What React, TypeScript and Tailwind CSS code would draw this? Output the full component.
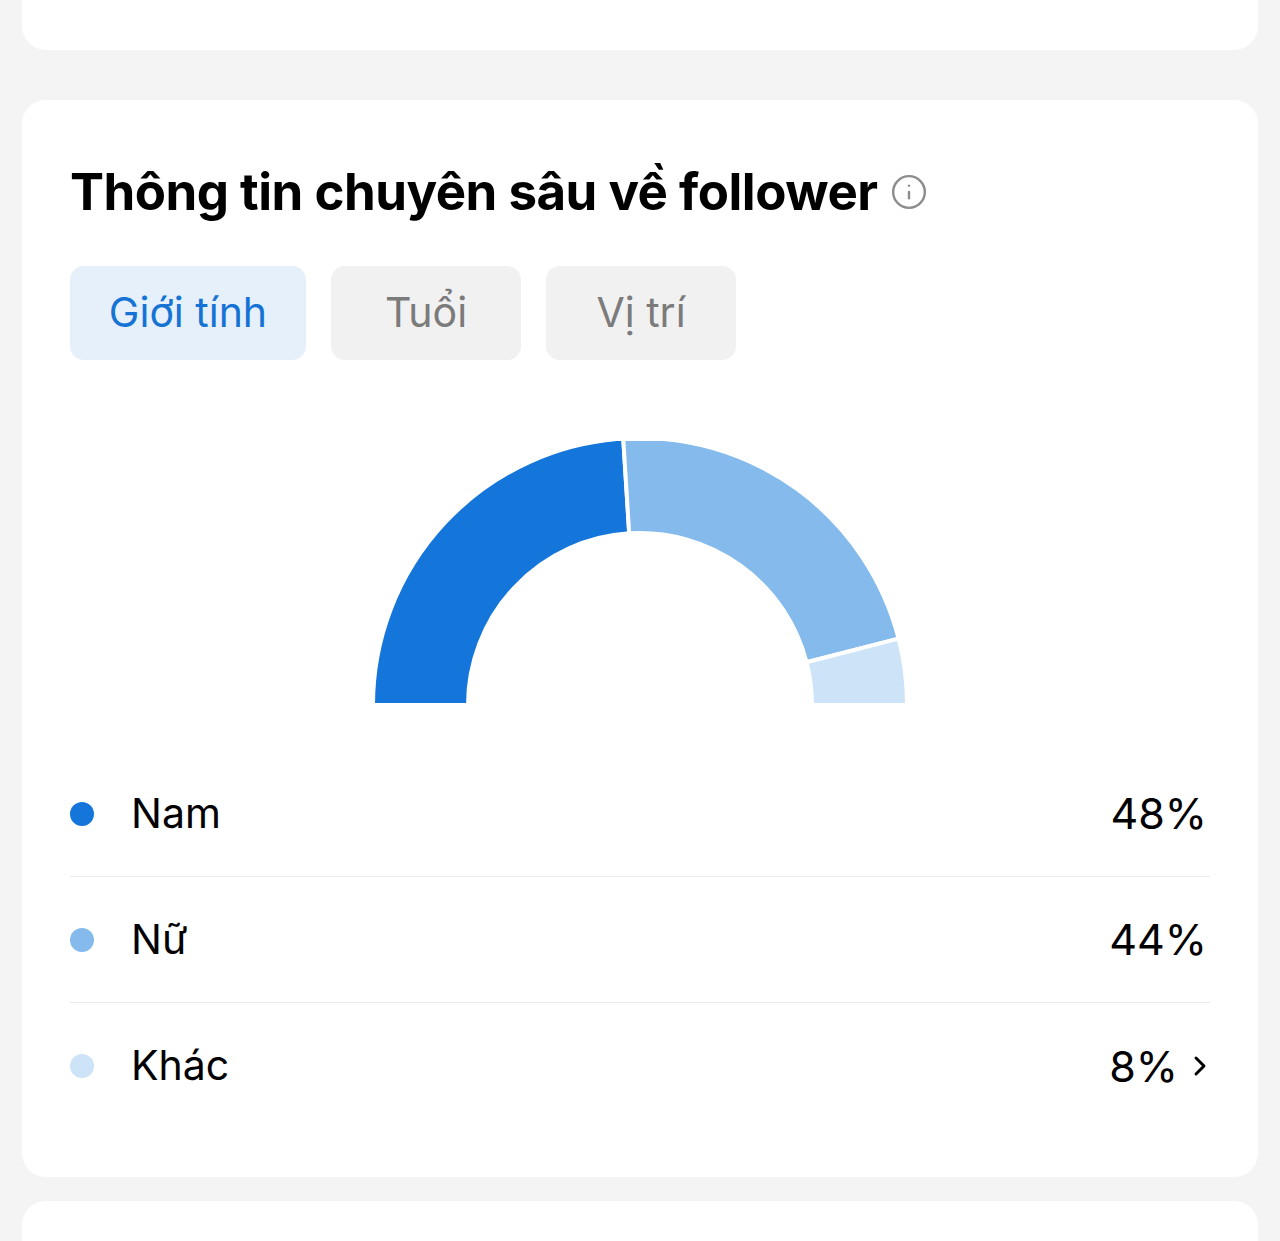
import { Info, ChevronRight } from "lucide-react";

type Slice = {
  label: string;
  value: number;
  color: string;
};

const slices: Slice[] = [
  { label: "Nam", value: 48, color: "#1476db" },
  { label: "Nữ", value: 44, color: "#84baec" },
  { label: "Khác", value: 8, color: "#cde3f7" },
];

const tabs = ["Giới tính", "Tuổi", "Vị trí"];

// half donut: fraction 0 = left end, 1 = right end
function arcPath(from: number, to: number, cx: number, cy: number, R: number, r: number) {
  const a0 = Math.PI * (1 - from);
  const a1 = Math.PI * (1 - to);
  const p = (rad: number, a: number) => `${cx + rad * Math.cos(a)} ${cy - rad * Math.sin(a)}`;
  const large = to - from > 0.5 ? 1 : 0;
  return `M ${p(R, a0)} A ${R} ${R} 0 ${large} 1 ${p(R, a1)} L ${p(r, a1)} A ${r} ${r} 0 ${large} 0 ${p(r, a0)} Z`;
}

function HalfDonut() {
  const cx = 267;
  const cy = 264;
  let acc = 0;
  return (
    <svg width="534" height="264" viewBox="0 0 534 264" className="block">
      {slices.map((s) => {
        const from = acc / 100;
        acc += s.value;
        const to = acc / 100;
        return (
          <path
            key={s.label}
            d={arcPath(from, to, cx, cy, 267, 172)}
            fill={s.color}
            stroke="#ffffff"
            strokeWidth={4}
          />
        );
      })}
    </svg>
  );
}

export default function App() {
  return (
    <div
      className="min-h-[1241px] overflow-hidden bg-[#f4f4f4]"
      style={{ fontFamily: "Inter, Roboto, 'Liberation Sans', sans-serif" }}
    >
      {/* previous card (cut off) */}
      <div className="mx-[22px] h-[50px] rounded-b-[24px] bg-white" />

      {/* follower insights */}
      <div className="mx-[22px] mt-[50px] rounded-[24px] bg-white px-[48px] pb-[48px] pt-[64px]">
        <div className="flex items-center gap-[14px]">
          <h2 className="text-[51px] font-bold leading-[56px] tracking-[-0.5px] text-black">
            Thông tin chuyên sâu về follower
          </h2>
          <Info size={38} strokeWidth={1.5} className="-ml-[2px] text-[#8c8c8c]" />
        </div>

        <div className="mt-[46px] flex gap-[25px]">
          {tabs.map((t, i) => (
            <button
              key={t}
              type="button"
              className={`flex h-[94px] items-center justify-center rounded-[14px] text-[41px] ${
                i === 0
                  ? "w-[236px] bg-[#e5f0fb] text-[#1473d5]"
                  : "w-[190px] bg-[#f1f1f1] text-[#7b7b7b]"
              }`}
            >
              {t}
            </button>
          ))}
        </div>

        <div className="mt-[81px] flex justify-center">
          <HalfDonut />
        </div>

        <div className="mt-[46px]">
          {slices.map((s, i) => (
            <div
              key={s.label}
              className={`flex h-[126px] items-center ${
                i < slices.length - 1 ? "border-b border-[#ebebeb]" : ""
              }`}
            >
              <span
                className="h-6 w-6 rounded-full"
                style={{ backgroundColor: s.color }}
              />
              <span className="ml-[37px] flex-1 text-[41px] text-black">{s.label}</span>
              <span className="mr-[3px] flex items-center text-[43px] text-black">
                {s.value}%
                {i === slices.length - 1 && (
                  <ChevronRight size={32} strokeWidth={2.2} className="ml-[6px] -mr-[9px]" />
                )}
              </span>
            </div>
          ))}
        </div>
      </div>

      {/* next card (cut off) */}
      <div className="mx-[22px] mt-[24px] h-[80px] rounded-t-[24px] bg-white" />
    </div>
  );
}
